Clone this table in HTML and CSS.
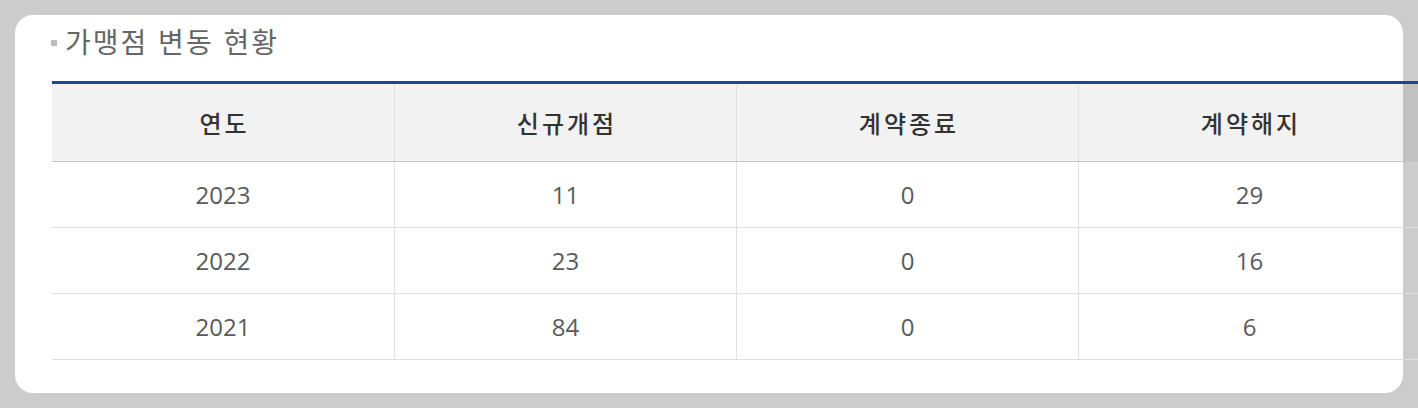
FILE: index.html
```html
<!DOCTYPE html>
<html lang="ko">
<head>
<meta charset="utf-8">
<title>가맹점 변동 현황</title>
<link rel="stylesheet" href="styles.css">
</head>
<body>
<section class="card">
  <h2 class="title"><span class="bullet"></span>가맹점 변동 현황</h2>
  <div class="table">
    <div class="row head">
      <div class="cell">연도</div>
      <div class="cell">신규개점</div>
      <div class="cell">계약종료</div>
      <div class="cell">계약해지</div>
    </div>
    <div class="row">
      <div class="cell">2023</div>
      <div class="cell">11</div>
      <div class="cell">0</div>
      <div class="cell">29</div>
    </div>
    <div class="row">
      <div class="cell">2022</div>
      <div class="cell">23</div>
      <div class="cell">0</div>
      <div class="cell">16</div>
    </div>
    <div class="row">
      <div class="cell">2021</div>
      <div class="cell">84</div>
      <div class="cell">0</div>
      <div class="cell">6</div>
    </div>
  </div>
</section>
</body>
</html>
```
FILE: styles.css
```css
html, body {
  margin: 0;
  padding: 0;
  background: #cccccc;
  overflow: hidden;
}
body {
  padding: 15px;
  box-sizing: border-box;
  width: 1418px;
  height: 408px;
}
.card {
  background: #ffffff;
  border-radius: 18px;
  width: 1388px;
  height: 378px;
  box-sizing: border-box;
  padding: 10px 0 0 37px;
}
.title {
  margin: 0;
  height: 33px;
  display: flex;
  align-items: center;
  font-family: "Noto Sans CJK KR", sans-serif;
  font-weight: 400;
  font-size: 28px;
  letter-spacing: 2px;
  line-height: 33px;
  color: #666666;
}
.bullet {
  display: inline-block;
  width: 6px;
  height: 6px;
  background: #bbbbbb;
  margin: 2px 8px 0 -1px;
}
.table {
  margin-top: 23px;
  width: 1368px;
  border-top: 3px solid #174a8b;
}
.row {
  display: grid;
  grid-template-columns: repeat(4, 342px);
  height: 66px;
  box-sizing: border-box;
  border-bottom: 1px solid #e0e0e0;
}
.row.head {
  height: 78px;
  background: rgba(0, 0, 0, 0.05);
  border-bottom: 1px solid #c4c4c4;
}
.cell {
  display: flex;
  align-items: center;
  justify-content: center;
  box-sizing: border-box;
  font-family: "Open Sans", "Noto Sans CJK KR", sans-serif;
  font-size: 24px;
  color: #5a5a5a;
}
.cell + .cell {
  border-left: 1px solid #e0e0e0;
}
.head .cell {
  font-family: "Noto Sans CJK KR", sans-serif;
  font-size: 24px;
  font-weight: 500;
  letter-spacing: 3px;
  padding-left: 3px;
  color: #333333;
}
```
